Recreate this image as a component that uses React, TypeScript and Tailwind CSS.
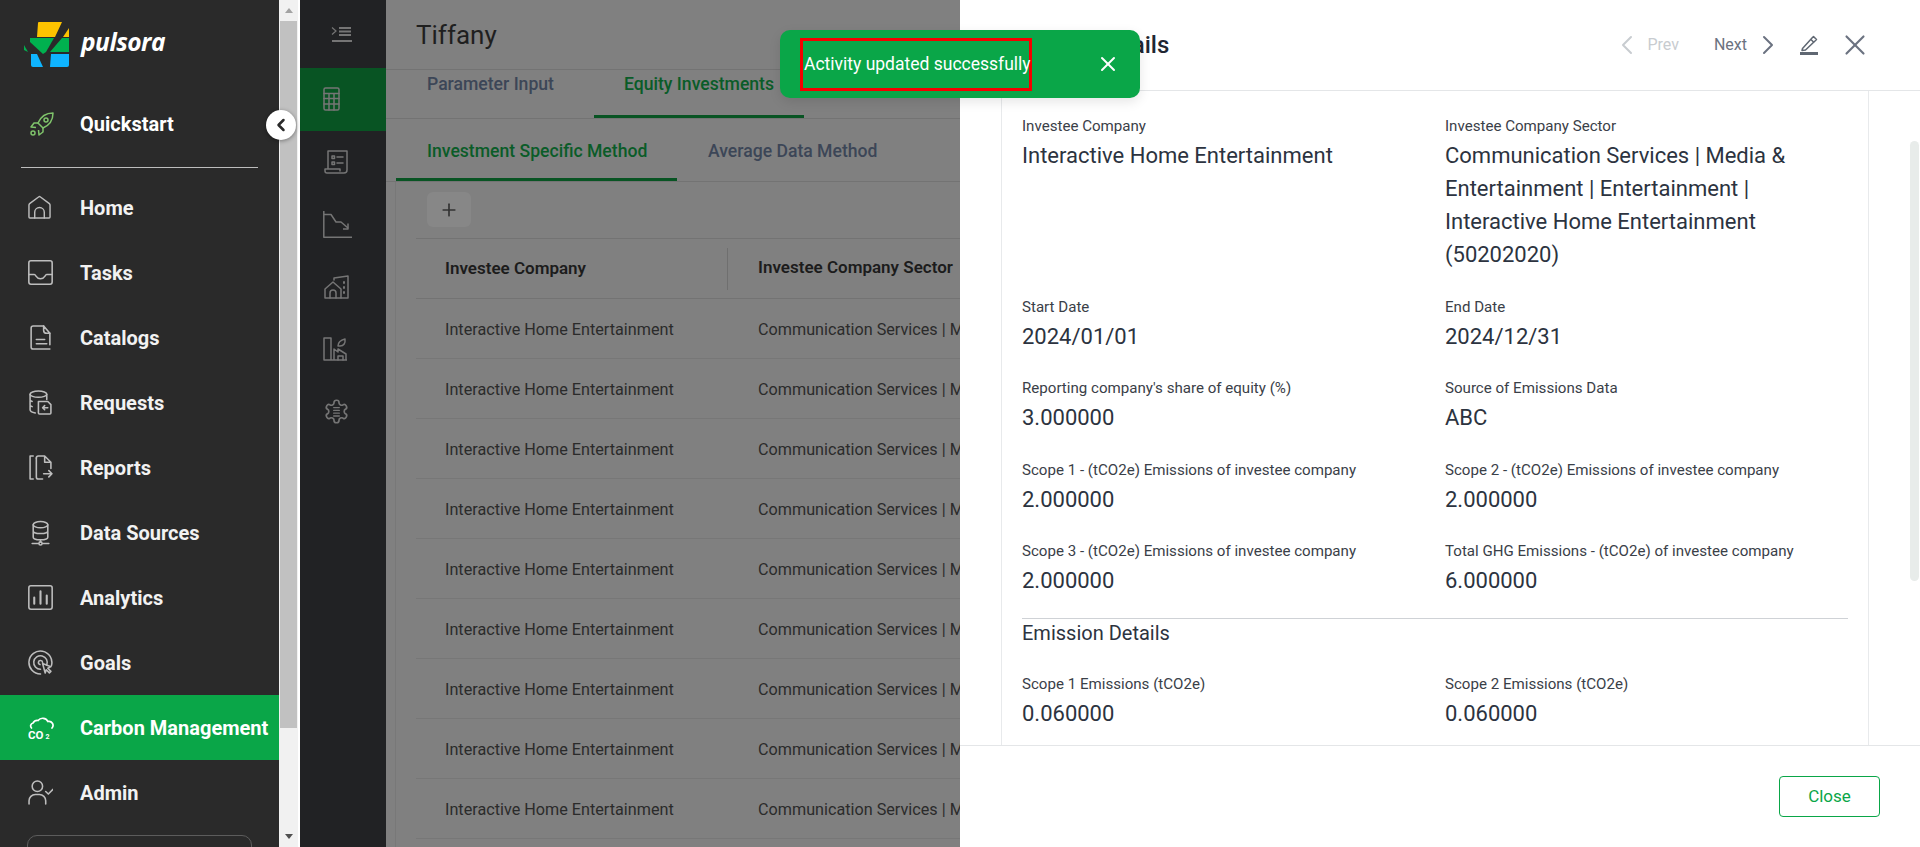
import { ChevronLeft, ChevronRight, Plus, X } from "lucide-react";

const roboto = "font-['Roboto',sans-serif]";

const Ico = ({ children, className = "w-[25px] h-[25px]" }: { children: React.ReactNode; className?: string }) => (
  <svg viewBox="0 0 24 24" fill="none" stroke="currentColor" strokeWidth="1.5" strokeLinecap="round" strokeLinejoin="round" className={className}>
    {children}
  </svg>
);

const navItems: { label: string; icon: React.ReactNode; active?: boolean }[] = [
  {
    label: "Home",
    icon: <Ico className="w-[23px] h-[25px]"><path d="M1 22V9.500a2 2 0 0 1 .7-1.500L11 1a1.500 1.500 0 0 1 2 0l9.300 7a2 2 0 0 1 .7 1.500V22a1 1 0 0 1-1 1H2a1 1 0 0 1-1-1Z" /><path d="M7 23v-6a5 5 0 0 1 10 0v6" /></Ico>,
  },
  {
    label: "Tasks",
    icon: <Ico><rect x="0.8" y="0.8" width="22.4" height="22.4" rx="2" /><path d="M1 14h5c2 0 1.500 4 6 4s4-4 6-4h5" /></Ico>,
  },
  {
    label: "Catalogs",
    icon: <Ico><path d="M15 1H5a2 2 0 0 0-2 2v18a2 2 0 0 0 2 2h16" /><path d="M15 1v4a3 3 0 0 0 3 3h3l-6-7" /><path d="M21 8v11M8 14h8M8 18h10" /></Ico>,
  },
  {
    label: "Requests",
    icon: <Ico><ellipse cx="10" cy="4" rx="8" ry="3" /><path d="M2 4v15c0 1.500 2 2.500 5 3M18 4v5M2 10l2 1M2 15l2 1" /><path d="M10 11h9l3 3v8a1 1 0 0 1-1 1H11a1 1 0 0 1-1-1Z" /><path d="M19 17h-5l2-2M14 17l2 2" /></Ico>,
  },
  {
    label: "Reports",
    icon: <Ico><path d="M5 1H2v22h3" /><path d="M8 3a2 2 0 0 1 2-2h6l6 6v6M22 7h-6V1" /><path d="M8 3v18a2 2 0 0 0 2 2h4" /><path d="M15 18h8M20 15l3 3-3 3" /></Ico>,
  },
  {
    label: "Data Sources",
    icon: <Ico className="w-[25px] h-[26px]"><ellipse cx="12" cy="4" rx="7" ry="3" /><path d="M5 4v12c0 1.500 3 2.500 7 2.500s7-1 7-2.500V4M5 10c0 1.500 3 2.500 7 2.500s7-1 7-2.500" /><path d="M12 18.500v2" /><circle cx="12" cy="22" r="1.500" /><path d="M4 22h6M14 22h6" /></Ico>,
  },
  {
    label: "Analytics",
    icon: <Ico><rect x="0.8" y="0.8" width="22.4" height="22.400" rx="2" /><path strokeWidth="2" d="M6 18v-6M12 18V6M18 18v-8" /></Ico>,
  },
  {
    label: "Goals",
    icon: <Ico><path d="M22.500 15A11 11 0 1 0 12 23" /><path d="M18 14.500A6.500 6.500 0 1 0 12 18.500" /><path d="M14 12a2 2 0 1 0-2.500 2" /><path d="M14 13l8 3-3 1.500 3 3-1.500 1.500-3-3-1 3Z" /></Ico>,
  },
  {
    label: "Carbon Management",
    active: true,
    icon: (
      <svg viewBox="0 0 26 25" fill="none" stroke="currentColor" strokeWidth="1.700" strokeLinecap="round" className="w-[26px] h-[25px]">
        <path d="M3.500 13a3 3 0 0 1 1.500-5 5 5 0 0 1 5-2.500 6 6 0 0 1 10 1 4 4 0 0 1 4 6.500" />
        <text x="0" y="24" stroke="none" fill="currentColor" fontFamily="Roboto, sans-serif" fontWeight="700" fontSize="11.500">CO</text>
        <text x="17.500" y="24" stroke="none" fill="currentColor" fontFamily="Roboto, sans-serif" fontWeight="700" fontSize="7">2</text>
      </svg>
    ),
  },
  {
    label: "Admin",
    icon: <Ico><circle cx="9" cy="6" r="5" /><path d="M1 23v-3a6 6 0 0 1 6-6h4a6 6 0 0 1 6 6v3" /><path d="M17 11l2.500 2.500L24 9" /></Ico>,
  },
];

const railIcons: React.ReactNode[] = [
  <Ico className="w-6 h-[26px]"><rect x="1" y="1" width="15" height="22" rx="1.500" /><path d="M1 6.500h15M1 11.500h15M1 17h15M6 6.500V23M11 6.500V23" /></Ico>,
  <Ico className="w-[26px] h-6"><path d="M4 19V1h19v19a3 3 0 0 1-3 3H3a2 2 0 0 1-2-2v-2h15v2" /><rect x="8" y="6" width="2.500" height="2.500" /><rect x="8" y="12" width="2.500" height="2.500" /><path d="M13 7h6M13 13h6" /></Ico>,
  <svg viewBox="0 0 29 27" fill="none" stroke="currentColor" strokeWidth="1.500" strokeLinejoin="round" className="w-[29px] h-[27px]">
    <path d="M.8 0v26.200H29" />
    <path d="M1 3.500h7l5 7.500h5l7 6" />
    <path d="M25 12.500V18h-5" />
  </svg>,
  <Ico className="w-[26px] h-6"><path d="M1 23V14l8-7 8 7v9Z" /><path d="M6 23v-5a3 3 0 0 1 6 0v5" /><path d="M10 5V3l14-2v22h-7" /><path d="M20 7v1M20 12v1M20 17v1" strokeWidth="2" /></Ico>,
  <Ico className="w-6 h-6"><path d="M1 23V1h7v22M1 23h23M11 23V12l4 3v-3l8 5v6" /><path d="M15 23v-4h5v4" /><path d="M15 9c0-4 3-6 7-7 .500 4-1 7-5 7Z" /></Ico>,
  <Ico className="w-[27px] h-[27px]">
    <path d="M12.220 2h-.44a2 2 0 0 0-2 2v.18a2 2 0 0 1-1 1.730l-.43.25a2 2 0 0 1-2 0l-.15-.08a2 2 0 0 0-2.730.73l-.22.38a2 2 0 0 0 .73 2.730l.15.1a2 2 0 0 1 1 1.720v.51a2 2 0 0 1-1 1.740l-.15.09a2 2 0 0 0-.73 2.730l.22.38a2 2 0 0 0 2.730.73l.15-.08a2 2 0 0 1 2 0l.43.25a2 2 0 0 1 1 1.730V20a2 2 0 0 0 2 2h.44a2 2 0 0 0 2-2v-.18a2 2 0 0 1 1-1.730l.43-.25a2 2 0 0 1 2 0l.15.08a2 2 0 0 0 2.730-.73l.22-.39a2 2 0 0 0-.73-2.730l-.15-.08a2 2 0 0 1-1-1.740v-.5a2 2 0 0 1 1-1.740l.15-.09a2 2 0 0 0 .73-2.730l-.22-.38a2 2 0 0 0-2.730-.73l-.15.08a2 2 0 0 1-2 0l-.43-.25a2 2 0 0 1-1-1.730V4a2 2 0 0 0-2-2z" />
    <path d="M9.500 8.500h5M9.500 11h5M9.500 13.500h5M9.500 16h5" strokeWidth="1.200" />
  </Ico>,
];

const details: [string, string[], string, string[]][] = [
  ["Investee Company", ["Interactive Home Entertainment"], "Investee Company Sector", ["Communication Services | Media &", "Entertainment | Entertainment |", "Interactive Home Entertainment", "(50202020)"]],
  ["Start Date", ["2024/01/01"], "End Date", ["2024/12/31"]],
  ["Reporting company's share of equity (%)", ["3.000000"], "Source of Emissions Data", ["ABC"]],
  ["Scope 1 - (tCO2e) Emissions of investee company", ["2.000000"], "Scope 2 - (tCO2e) Emissions of investee company", ["2.000000"]],
  ["Scope 3 - (tCO2e) Emissions of investee company", ["2.000000"], "Total GHG Emissions - (tCO2e) of investee company", ["6.000000"]],
];

const Field = ({ label, lines }: { label: string; lines: string[] }) => (
  <div className="w-[423px] shrink-0">
    <div className="text-[15.100px] leading-[20px] text-[#3a4048]">{label}</div>
    <div className="mt-[3px] pb-[1px] text-[22px] leading-[33px] text-[#2c3340]">
      {lines.map((l) => (
        <div key={l}>{l}</div>
      ))}
    </div>
  </div>
);

const Sidebar = () => (
  <aside className={`w-[279px] shrink-0 h-full bg-[#2a2a2a] text-white overflow-hidden ${roboto}`}>
    <div className="h-[91px] pl-[24px] pt-[22px] flex items-start">
      <svg viewBox="0 0 46 46" className="w-[46px] h-[46px] shrink-0">
        <path d="M14 1q0-1 1-1h23l-7 15H13Z" fill="#fdc300" />
        <path d="M45 6v9h-6Z" fill="#fdc300" />
        <path d="M6 16h24l-8 14-3 2L6 20Z" fill="#00b14f" />
        <path d="M38 16h7v14H26Z" fill="#00b14f" />
        <path d="M0 23l4 7-4-2Z" fill="#00b14f" />
        <path d="M7 32h6l6 13H9q-2 0-2-2Z" fill="#0fb4ff" />
        <path d="M27 32h18v11q0 2-2 2H26Z" fill="#0fb4ff" />
      </svg>
      <span className="ml-[11px] mt-[4px] font-['Open_Sans',sans-serif] italic font-bold text-[24.5px] leading-[32px] tracking-[-0.5px]">pulsora</span>
    </div>
    <div className="h-[65px] flex items-center pl-[30px]">
      <svg viewBox="0 0 24 24" fill="none" stroke="#7fc36b" strokeWidth="1.500" strokeLinejoin="round" className="w-6 h-6 shrink-0">
        <path d="M23 1c-7 0-12 3-15 10l5 5c7-3 10-8 10-15Z" />
        <circle cx="16" cy="8" r="2" />
        <path d="M8 11H4l-3 4 5 .5M13 16v4l-4 3-.5-5" />
        <circle cx="3" cy="21" r="2" />
      </svg>
      <span className="ml-[26px] text-[20px] font-bold">Quickstart</span>
    </div>
    <div className="mx-[21px] mt-[11px] h-px bg-[#bdbdbd]" />
    <nav className="mt-[7px]">
      {navItems.map((n) => (
        <div key={n.label} className={`h-[65px] flex items-center pl-[28px] ${n.active ? "bg-[#0aa648] text-white" : "text-[#f2f2f2]"}`}>
          <span className={`w-[26px] shrink-0 ${n.active ? "text-white" : "text-[#bdbdbd]"}`}>{n.icon}</span>
          <span className="ml-[26px] text-[20px] font-bold whitespace-nowrap">{n.label}</span>
        </div>
      ))}
    </nav>
    <div className="mx-[27px] mt-[10px] h-[40px] rounded-[10px] border border-[#5c5c5c]" />
  </aside>
);

const Scrollbar = () => (
  <div className="w-[21px] shrink-0 h-full bg-[#f1f1f1] flex flex-col items-center border-r-2 border-r-white">
    <div className="h-[21px] w-full flex items-center justify-center">
      <div className="w-0 h-0 border-x-[4px] border-x-transparent border-b-[5px] border-b-[#a3a3a3]" />
    </div>
    <div className="w-[17px] h-[707px] bg-[#c1c1c1]" />
    <div className="flex-1" />
    <div className="h-[21px] w-full flex items-center justify-center">
      <div className="w-0 h-0 border-x-[4px] border-x-transparent border-t-[5px] border-t-[#505050]" />
    </div>
  </div>
);

const Rail = () => (
  <div className="w-[86px] shrink-0 h-full bg-[#212224] text-[#757575]">
    <div className="h-[68px] flex items-center justify-center">
      <svg viewBox="0 0 22 16" fill="none" stroke="#757575" strokeWidth="2" className="w-[22px] h-4 mt-[2px] ml-[-3px]">
        <path strokeWidth="1.200" d="M1 0.500l4 3.500-4 3.500" />
        <path d="M8 1h12M8 4.500h12M8 8h12M1 14h20" />
      </svg>
    </div>
    <div className="flex flex-col">
      {railIcons.map((ic, i) => (
        <div key={i} className={`h-[62.500px] flex items-center pl-[23px] ${i === 0 ? "bg-[#085423]" : ""}`}>
          {ic}
        </div>
      ))}
    </div>
  </div>
);

const Main = () => (
  <main className={`flex-1 h-full bg-[#808080] overflow-hidden ${roboto}`}>
    <div className="h-[70px] border-b border-[#737373] pl-[30px] pt-[1px] flex items-center text-[26px] text-[#1f1f1f]">Tiffany</div>
    <div className="h-[49px] border-b border-[#737373] flex pl-[30px] text-[17.600px] font-medium">
      <div className="w-[178px] pl-[11px] pt-[1px] leading-[24px] mt-[1px] text-[#3c4657]">Parameter Input</div>
      <div className="pl-[30px] w-[210px] pt-[2px] leading-[24px] text-[#0a5c28] border-b-[3px] border-b-[#085423] whitespace-nowrap">Equity Investments</div>
    </div>
    <div className="h-[63px] border-b border-[#737373] flex pl-[10px] text-[17.600px] font-medium">
      <div className="w-[281px] pl-[31px] pt-[20px] leading-[24px] text-[#0a5c28] border-b-[3px] border-b-[#085423] whitespace-nowrap">Investment Specific Method</div>
      <div className="pl-[31px] pt-[20px] leading-[24px] text-[#3c4657]">Average Data Method</div>
    </div>
    <div className="ml-[9px] border-l border-[#787878] h-full pl-[20px]">
      <div className="pt-[10px] h-[56px] pl-[11px]">
        <button className="w-[44px] h-[35px] rounded-[6px] bg-[#878787] flex items-center justify-center text-[#333]">
          <Plus className="w-[20px] h-[20px]" strokeWidth={2} />
        </button>
      </div>
      <div className="h-[61px] border-y border-[#737373] flex items-center text-[17px] font-semibold text-[#1c1c1c]">
        <div className="w-[312px] pl-[29px] border-r border-[#6f6f6f] h-[42px] leading-[40px]">Investee Company</div>
        <div className="pl-[30px] pb-[2px] whitespace-nowrap">Investee Company Sector</div>
      </div>
      {Array.from({ length: 9 }).map((_, i) => (
        <div key={i} className="h-[60px] pt-[3px] border-b border-[#777] flex items-center text-[16.200px] text-[#2b2b2b] whitespace-nowrap overflow-hidden">
          <div className="w-[313px] pl-[29px]">Interactive Home Entertainment</div>
          <div className="pl-[29px]">Communication Services | Media &amp; Entertainment</div>
        </div>
      ))}
    </div>
  </main>
);

const Drawer = () => (
  <section className={`absolute right-0 top-0 w-[960px] h-full bg-white flex flex-col ${roboto}`}>
    <header className="h-[91px] shrink-0 border-b border-[#e4e6e8] flex items-center pl-[49px] pr-[48px]">
      <h2 className="text-[24px] font-medium text-[#1f2733]">Activity Details</h2>
      <div className="ml-auto flex items-center text-[16px]">
        <ChevronLeft className="w-8 h-8 text-[#c8ccd0]" strokeWidth={1.500} />
        <span className="ml-[4px] text-[#c8ccd0]">Prev</span>
        <span className="ml-[35px] text-[#6b7280]">Next</span>
        <ChevronRight className="ml-[5px] w-8 h-8 text-[#6b7280]" strokeWidth={1.500} />
        <svg viewBox="0 0 20 20" fill="none" className="ml-[15px] w-5 h-5 text-[#5f6772]">
          <path d="M3.500 13.500 13 3l1.500-1.500 3 3L16 6l-9.500 9-3.500.500Z" stroke="currentColor" strokeWidth="1.500" strokeLinejoin="round" />
          <path d="M12 4.500l3 3" stroke="currentColor" strokeWidth="1.500" />
          <path d="M1 17h18v3H1Z" fill="currentColor" />
        </svg>
        <X className="ml-[19px] w-[34px] h-[34px] text-[#6b7280]" strokeWidth={1.500} />
      </div>
    </header>
    <div className="flex-1 min-h-0 relative overflow-hidden">
      <div className="ml-[41px] w-[868px] h-full border-x border-[#e8eaec] pl-[20px] pt-[25px] overflow-hidden">
        {details.map(([la, va, lb, vb]) => (
          <div key={la} className="flex pb-[24.500px]">
            <Field label={la} lines={va} />
            <Field label={lb} lines={vb} />
          </div>
        ))}
        <div className="w-[826px] border-t border-[#cfd2d6] -mt-[5px] pt-[1px] text-[20px] leading-[26px] text-[#2c3340]">Emission Details</div>
        <div className="flex mt-[28px]">
          <Field label="Scope 1 Emissions (tCO2e)" lines={["0.060000"]} />
          <Field label="Scope 2 Emissions (tCO2e)" lines={["0.060000"]} />
        </div>
      </div>
      <div className="absolute right-[1px] top-[50px] w-[9px] h-[440px] rounded-full bg-[#e8ecea]" />
    </div>
    <footer className="h-[102px] shrink-0 border-t border-[#e4e6e8] flex items-start justify-end pr-[40px] pt-[30px]">
      <button className="w-[101px] h-[41px] rounded-[4px] border border-[#0aa648] text-[17px] text-[#0aa648]">Close</button>
    </footer>
  </section>
);

export default function App() {
  return (
    <div className="relative w-[1920px] h-[847px] flex overflow-hidden">
      <Sidebar />
      <Scrollbar />
      <Rail />
      <Main />
      <Drawer />
      <button className="absolute left-[266px] top-[110px] w-[30px] h-[30px] rounded-full bg-white shadow-[0_1px_4px_rgba(0,0,0,0.4)] flex items-center justify-center text-[#2a2a2a]">
        <ChevronLeft className="w-5 h-5" strokeWidth={3} />
      </button>
      <div className={`absolute left-[780px] top-[30px] w-[360px] h-[68px] rounded-[10px] bg-[#0aa648] shadow-[0_4px_12px_rgba(0,0,0,0.1)] flex items-center text-white ${roboto}`}>
        <div className="ml-[20px] w-[232px] h-[53px] pl-[1px] border-[3px] border-[#f40000] flex items-center text-[17.500px] whitespace-nowrap">Activity updated successfully</div>
        <X className="ml-[64px] w-[24px] h-[24px]" strokeWidth={2} />
      </div>
    </div>
  );
}
